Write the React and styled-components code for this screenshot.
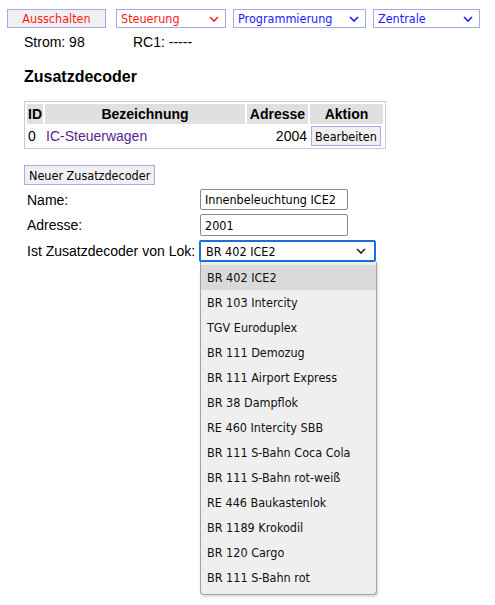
import styled, { createGlobalStyle } from "styled-components";

const GlobalStyle = createGlobalStyle`
  body {
    margin: 0;
    background: #ffffff;
    font-family: "Liberation Sans", Arial, sans-serif;
    font-size: 14px;
    color: #000;
  }
`;

const uiFont = `"DejaVu Sans Condensed", "DejaVu Sans", sans-serif`;

// ========== LAYOUT ==========
const Page = styled.div`
  width: 495px;
  height: 605px;
  padding: 9px 0 0 7px;
  box-sizing: border-box;
  position: relative;
  overflow: hidden;
`;

const Content = styled.div`
  padding-left: 17px;
`;

// ========== TOP BAR ==========
const TopBar = styled.div`
  display: flex;
  align-items: center;
  height: 19px;
`;

const NavButton = styled.button`
  width: 99px;
  height: 19px;
  margin-right: 10px;
  padding: 0;
  background: #f0f0f0;
  border: 1px solid #a8a8f0;
  color: #ff1a1a;
  font-family: ${uiFont};
  font-size: 12.5px;
`;

const NavSelect = styled.div`
  width: ${({ $w }) => $w}px;
  height: 19px;
  margin-right: 7px;
  box-sizing: border-box;
  border: 1px solid #a8a8f0;
  background: #fff;
  color: ${({ $color }) => $color};
  font-family: ${uiFont};
  font-size: 12.5px;
  display: flex;
  align-items: center;
  justify-content: space-between;
  padding: 0 6px 0 4px;
`;

const StatusRow = styled.div`
  display: flex;
  margin-top: 6px;
  height: 16px;
  align-items: center;

  span:first-child {
    width: 109px;
  }
`;

const Heading = styled.h2`
  margin: 17px 0 0;
  font-size: 16px;
  font-weight: bold;
  line-height: 19px;
`;

// ========== TABLE ==========
const Table = styled.table`
  margin-top: 15px;
  border: 1px solid #cccccc;
  border-spacing: 2px;
  font-size: 14px;
  table-layout: fixed;

  th {
    background: #e0e0e0;
    font-weight: bold;
    height: 20px;
    padding: 0 1px;
  }

  td {
    height: 20px;
    padding: 0 1px;
    white-space: nowrap;
  }
`;

const LinkText = styled.span`
  color: #5a2590;
`;

const SmallButton = styled.button`
  height: 20px;
  padding: 0 3px;
  background: #f0f0f0;
  border: 1px solid #a8a8f0;
  font-family: ${uiFont};
  font-size: 12.5px;
  color: #000;
`;

// ========== FORM ==========
const NewButton = styled(SmallButton)`
  margin-top: 16px;
  padding: 0 4px;
  display: block;
`;

const Form = styled.div`
  display: grid;
  grid-template-columns: 173px auto;
  row-gap: 4px;
  margin-top: 4px;
  padding-left: 3px;
  align-items: center;
`;

const Label = styled.label`
  font-size: 14px;
`;

const TextInput = styled.div`
  width: 148px;
  height: ${({ $h }) => $h}px;
  box-sizing: border-box;
  border: 1px solid #8a8a8a;
  border-radius: 2px;
  font-family: ${uiFont};
  font-size: 12.5px;
  padding: 0 4px;
  display: flex;
  align-items: center;
`;

const SelectWrap = styled.div`
  position: relative;
  margin-left: -1px;
`;

const LokSelect = styled.div`
  width: 177px;
  height: 22px;
  box-sizing: border-box;
  border: 2px solid #1a6ee0;
  border-radius: 2px;
  font-family: ${uiFont};
  font-size: 12.5px;
  padding: 0 8px 0 5px;
  display: flex;
  align-items: center;
  justify-content: space-between;
`;

const DropList = styled.ul`
  position: absolute;
  top: 22px;
  left: 1px;
  width: 177px;
  margin: 0;
  padding: 3px 0 4px;
  list-style: none;
  box-sizing: border-box;
  background: #efefef;
  border: 1px solid #a3a3a3;
  border-top: none;
  border-radius: 0 0 4px 4px;
  box-shadow: 1px 2px 3px rgba(0, 0, 0, 0.15);
`;

const DropItem = styled.li`
  height: 25px;
  line-height: 25px;
  padding-left: 6px;
  font-family: ${uiFont};
  font-size: 12.5px;
  color: #111;
  background: ${({ $active }) => ($active ? "#dadada" : "transparent")};
`;

const Chevron = ({ color = "#000" }) => (
  <svg width="10" height="6" viewBox="0 0 10 6">
    <path d="M1 1 L5 5 L9 1" fill="none" stroke={color} strokeWidth="1.6" />
  </svg>
);

const loks = [
  "BR 402 ICE2",
  "BR 103 Intercity",
  "TGV Euroduplex",
  "BR 111 Demozug",
  "BR 111 Airport Express",
  "BR 38 Dampflok",
  "RE 460 Intercity SBB",
  "BR 111 S-Bahn Coca Cola",
  "BR 111 S-Bahn rot-weiß",
  "RE 446 Baukastenlok",
  "BR 1189 Krokodil",
  "BR 120 Cargo",
  "BR 111 S-Bahn rot",
];

export default function App() {
  return (
    <Page>
      <GlobalStyle />
      <TopBar>
        <NavButton>Ausschalten</NavButton>
        <NavSelect $w={110} $color="#ff1a1a">
          Steuerung <Chevron color="#ff1a1a" />
        </NavSelect>
        <NavSelect $w={133} $color="#1a1aff">
          Programmierung <Chevron color="#1a1aff" />
        </NavSelect>
        <NavSelect $w={107} $color="#1a1aff">
          Zentrale <Chevron color="#1a1aff" />
        </NavSelect>
      </TopBar>

      <Content>
        <StatusRow>
          <span>Strom: 98</span>
          <span>RC1: -----</span>
        </StatusRow>

        <Heading>Zusatzdecoder</Heading>

        <Table>
          <colgroup>
            <col style={{ width: 16 }} />
            <col style={{ width: 200 }} />
            <col style={{ width: 61 }} />
            <col style={{ width: 73 }} />
          </colgroup>
          <thead>
            <tr>
              <th>ID</th>
              <th>Bezeichnung</th>
              <th>Adresse</th>
              <th>Aktion</th>
            </tr>
          </thead>
          <tbody>
            <tr>
              <td>0</td>
              <td><LinkText>IC-Steuerwagen</LinkText></td>
              <td style={{ textAlign: "right" }}>2004</td>
              <td><SmallButton>Bearbeiten</SmallButton></td>
            </tr>
          </tbody>
        </Table>

        <NewButton>Neuer Zusatzdecoder</NewButton>

        <Form>
          <Label>Name:</Label>
          <TextInput $h={21}>Innenbeleuchtung ICE2</TextInput>
          <Label>Adresse:</Label>
          <TextInput $h={22}>2001</TextInput>
          <Label>Ist Zusatzdecoder von Lok:</Label>
          <SelectWrap>
            <LokSelect>
              BR 402 ICE2 <Chevron color="#222" />
            </LokSelect>
            <DropList>
              {loks.map((l, i) => (
                <DropItem key={l} $active={i === 0}>{l}</DropItem>
              ))}
            </DropList>
          </SelectWrap>
        </Form>
      </Content>
    </Page>
  );
}
